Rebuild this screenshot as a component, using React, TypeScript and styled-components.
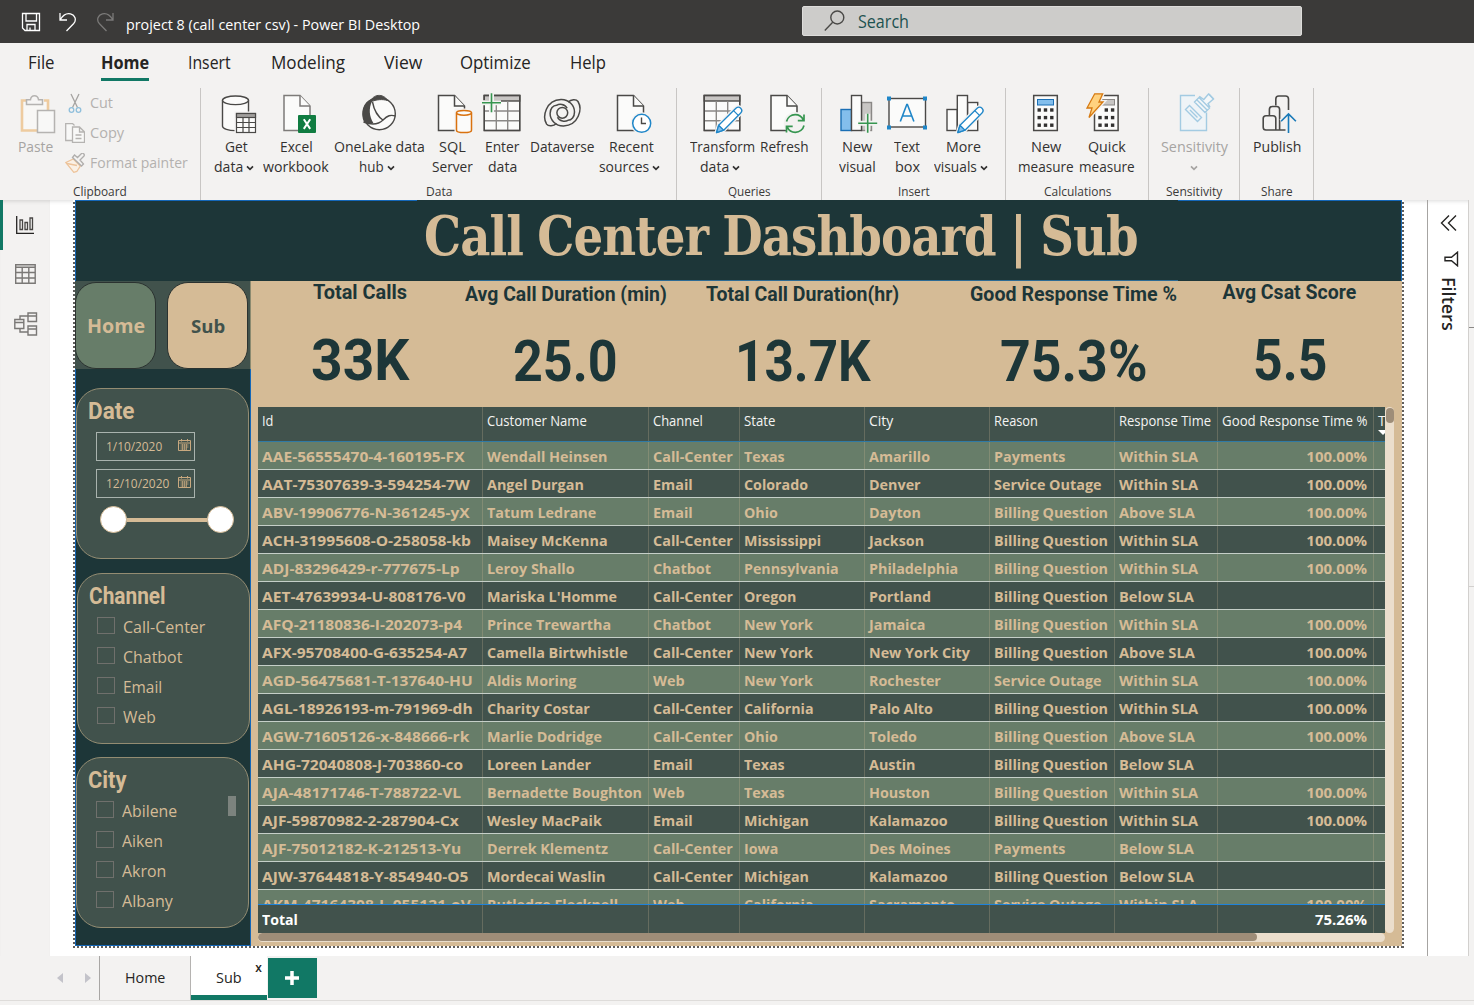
import React, { useLayoutEffect, useRef, useState } from "react";
import styled, { createGlobalStyle } from "styled-components";

const UI = `"Open Sans", "Noto Sans", sans-serif`;
const DIN = `Roboto, "Liberation Sans", sans-serif`;
const C = {
  deep: "#1d3638",
  slate: "#41524c",
  sage: "#677d69",
  sand: "#d5bb96",
  chrome: "#f3f2f1",
  green: "#117865",
  ink: "#3b3a39",
  blue: "#1467b8",
};

const Global = createGlobalStyle`
  * { box-sizing: border-box; }
  html, body { margin: 0; padding: 0; overflow: hidden; background: ${C.chrome}; }
  body { font-family: ${UI}; color: #252423; }
  svg { display: block; flex: none; }
`;

/* ---------- text that keeps a fixed measure ---------- */
const FitBox = styled.span`
  display: inline-block;
  white-space: nowrap;
  text-align: left;
  flex: none;
`;
const FitInk = styled.span`
  display: inline-block;
  transform-origin: 0 50%;
`;
function Fit({ w, children }: { w: number; children: React.ReactNode }) {
  const ref = useRef<HTMLSpanElement>(null);
  const [k, setK] = useState(1);
  useLayoutEffect(() => {
    if (ref.current) setK(w / ref.current.offsetWidth);
  }, [w]);
  return (
    <FitBox style={{ width: w }}>
      <FitInk ref={ref} style={{ transform: `scaleX(${k})` }}>{children}</FitInk>
    </FitBox>
  );
}

/* ---------- window ---------- */
const Window = styled.div`
  width: 1474px;
  height: 1005px;
  display: flex;
  flex-direction: column;
  background: ${C.chrome};
  overflow: hidden;
`;
const TitleBar = styled.header`
  height: 43px;
  flex: none;
  display: flex;
  align-items: center;
  background: ${C.ink};
  color: #fff;
  font-size: 15px;
`;
const QuickIcons = styled.div`
  display: flex;
  align-items: center;
  gap: 17px;
  padding-left: 21px;
  width: 126px;
`;
const DocName = styled.div`
  width: 676px;
  padding-top: 5px;
`;
const SearchBox = styled.div`
  width: 500px;
  height: 30px;
  display: flex;
  align-items: center;
  gap: 13px;
  padding: 0 0 1px 21px;
  margin-top: -1px;
  border-radius: 2px;
  background: #cdccca;
  border: 1px solid #dddcda;
  color: #1d5250;
  font-size: 18px;
`;
const Tabs = styled.nav`
  height: 45px;
  flex: none;
  display: flex;
  padding-left: 28px;
  font-size: 18px;
  line-height: 39px;
`;
const Tab = styled.div<{ $gap: number; $on?: boolean }>`
  height: 38px;
  margin-right: ${(p) => p.$gap}px;
  font-weight: ${(p) => (p.$on ? 700 : 400)};
  border-bottom: ${(p) => (p.$on ? `3px solid ${C.green}` : "0")};
`;

/* ---------- ribbon ---------- */
const Ribbon = styled.div`
  height: 112px;
  flex: none;
  display: flex;
`;
const Group = styled.section<{ $w: number }>`
  width: ${(p) => p.$w}px;
  height: 112px;
  display: flex;
  flex-direction: column;
  border-right: 1px solid #c8c6c4;
`;
const GroupBody = styled.div<{ $pad: number }>`
  display: flex;
  padding-left: ${(p) => p.$pad}px;
  height: 92px;
`;
const GroupName = styled.div`
  text-align: center;
  font-size: 12.5px;
  line-height: 16px;
  padding-top: 4px;
  height: 20px;
  color: #3b3a39;
`;
const Btn = styled.div<{ $w: number; $off?: boolean }>`
  width: ${(p) => p.$w}px;
  flex: none;
  display: flex;
  flex-direction: column;
  align-items: center;
  padding-top: 5px;
  color: ${(p) => (p.$off ? "#a6a4a2" : "#323130")};
  font-size: 15px;
`;
const Line = styled.div<{ $chev?: boolean }>`
  height: 20px;
  line-height: 20px;
  display: flex;
  align-items: center;
  gap: 3px;
  margin-left: ${(p) => (p.$chev ? -4 : 0)}px;
  &:first-of-type { margin-top: 1px; }
`;
const SmallList = styled.div`
  display: flex;
  flex-direction: column;
  color: #b3b1af;
  font-size: 15px;
`;
const SmallRow = styled.div`
  height: 30px;
  display: flex;
  align-items: center;
  gap: 5px;
`;
const SmallText = styled.span`
  margin-top: -2px;
`;

const Chev = ({ c = "#323130" }: { c?: string }) => (
  <svg width="8" height="6" viewBox="0 0 8 6" style={{ marginTop: 3 }}>
    <path d="M1 1.3L4 4.3L7 1.3" fill="none" stroke={c} strokeWidth="1.7" />
  </svg>
);

const K = "#4a4947";
const DocShape = ({ x, c = K }: { x: number; c?: string }) => (
  <g fill="#fbfbfa" stroke={c} strokeWidth="1.5">
    <path d={`M${x} 95.5h16l10 10.5v24.5h-26z`} />
    <path d={`M${x + 16} 95.5v10.5h10`} />
  </g>
);
const Grid = ({ x }: { x: number }) => (
  <g fill="none" stroke={K} strokeWidth="1.4">
    <rect x={x} y="95.5" width="35.4" height="35" fill="#fbfbfa" />
    <rect x={x} y="95.5" width="35.4" height="5.5" fill="#c8c6c4" />
    <path d={`M${x + 12} 101v29.5M${x + 23.4} 101v29.5M${x} 111h35.4M${x} 120.8h35.4`} stroke="#8a8886" />
    <rect x={x} y="95.5" width="35.4" height="35" />
  </g>
);
const Pencil = ({ x }: { x: number }) => (
  <g strokeWidth="1.3" stroke="#1f86c8" strokeLinejoin="round">
    <path d={`M${x} 132.6l2.2-7.4L${x + 19.4} 108.2c1.6-1.4 3.4-1.4 4.8 0s1.4 3.4 0 4.8L${x + 7.2} 130.2z`} fill="#fff" stroke="#f3f2f1" strokeWidth="4" />
    <path d={`M${x} 132.6l2.2-7.4L${x + 19.4} 108.2c1.6-1.4 3.4-1.4 4.8 0s1.4 3.4 0 4.8L${x + 7.2} 130.2z`} fill="#fff" />
    <path d={`M${x} 132.6l2.2-7.4 5 5z`} fill="#83beec" />
    <path d={`M${x + 17} 110.6l5 5`} />
  </g>
);
const Plus = ({ x, y }: { x: number; y: number }) => (
  <g>
    <path d={`M${x - 9.5} ${y}h19M${x} ${y - 9.5}v19`} stroke="#f3f2f1" strokeWidth="5" />
    <path d={`M${x - 9.5} ${y}h19M${x} ${y - 9.5}v19`} stroke="#369650" strokeWidth="1.6" />
  </g>
);
const Keys = ({ x, skip }: { x: number; skip?: boolean }) => (
  <g fill="#323130">
    {[0, 1, 2].map((r) =>
      [0, 1, 2].map((c) =>
        skip && c === 0 && r === 0 ? null : (
          <rect key={`${r}${c}`} x={x + c * 6.3} y={108.3 + r * 7.6} width="3.4" height="3.4" />
        )
      )
    )}
  </g>
);

const icons: Record<string, React.ReactNode> = {
  get: (
    <>
      <g fill="#fbfbfa" stroke={K} strokeWidth="1.4">
        <path d="M222.5 100.3v26c0 2.5 6 4.3 13 4.3s13-1.8 13-4.3v-26" />
        <ellipse cx="235.5" cy="100.3" rx="13" ry="4.3" />
      </g>
      <rect x="234.5" y="111.5" width="23" height="23" fill={C.chrome} />
      <g stroke={K} strokeWidth="1.2" fill="#fbfbfa">
        <rect x="236.5" y="113.5" width="19" height="19" />
        <rect x="236.5" y="113.5" width="19" height="4" fill="#a19f9d" />
        <path d="M243 117.5v15M249 117.5v15M236.5 122.5h19M236.5 127.5h19" />
      </g>
    </>
  ),
  excel: (
    <>
      <DocShape x={284} c="#7d7b79" />
      <rect x="298" y="115" width="18" height="18" rx="1" fill="#107c41" />
      <path d="M303.8 119.3l6.4 9.6M310.2 119.3l-6.4 9.6" stroke="#fff" strokeWidth="2" />
    </>
  ),
  lake: (
    <>
      <circle cx="379.3" cy="113.7" r="16" fill="#fbfbfa" stroke={K} strokeWidth="1.4" />
      <path d="M372 98.5c-9 3.5-12 14-8 23.5 3 1.8 7 2 9.5 1.2-4.5-7-4.8-15-1.5-21.7z" fill={K} />
      <path d="M370.5 102c2-8 13-9 17-1.5-5-1.5-11-1.2-17 1.5z" fill={K} stroke={K} />
      <path d="M372.5 102c1.5 8 5 14.5 11 18.5M363.5 122c8 3 15 2.5 19.5-2s7.500-5.500 12.500-4" fill="none" stroke={K} strokeWidth="1.4" />
    </>
  ),
  sql: (
    <>
      <DocShape x={438.5} />
      <rect x="454.5" y="108.5" width="19" height="26" fill={C.chrome} />
      <g fill="#fbfbfa" stroke="#d9720f" strokeWidth="1.5">
        <path d="M456.5 112.8v17.4c0 1.4 3.3 2.4 7.5 2.4s7.5-1 7.5-2.4v-17.4" />
        <ellipse cx="464" cy="112.8" rx="7.5" ry="2.4" />
      </g>
    </>
  ),
  enter: (
    <>
      <Grid x={484.3} />
      <Plus x={491.5} y={102.7} />
    </>
  ),
  verse: (
    <g fill="none" stroke={K} strokeWidth="1.5">
      <path d="M556.5 123.5c-3 2.7-8 3.2-9.9.6-4.6-7.5-.8-23.8 14.4-24.5 8-.2 13.5 6 13.5 12.4 0 5-3 8.3-6.5 8.3-2.500 1.500-8.500 1.500-10.500-3" />
      <path d="M568.1 102.1c3-2.7 8-3.200 9.900-.6 4.600 7.500.8 23.800-14.400 24.500-8 .2-13.500-6-13.500-12.400 0-5 3-8.300 6.500-8.300 2.500-1.500 8.500-1.500 10.500 3" />
      <circle cx="562.3" cy="112.8" r="5.400" />
    </g>
  ),
  recent: (
    <>
      <DocShape x={617.5} />
      <circle cx="641.7" cy="123.3" r="11" fill={C.chrome} />
      <circle cx="641.7" cy="123.3" r="9" fill="#fff" stroke="#1f86c8" strokeWidth="1.5" />
      <path d="M641.5 117.5v6h4.5" fill="none" stroke={K} strokeWidth="1.4" />
    </>
  ),
  transform: (
    <>
      <Grid x={704.3} />
      <Pencil x={716.5} />
    </>
  ),
  refresh: (
    <>
      <DocShape x={770.5} />
      <circle cx="794.7" cy="123.5" r="11.5" fill={C.chrome} />
      <g fill="none" stroke="#369650" strokeWidth="1.7">
        <path d="M786 121.500c1-4 4.500-6.800 8.700-6.800 3.500 0 6.500 1.800 8.200 5.500M803.500 114.500v6.200h-6.200" />
        <path d="M803.500 125.500c-1 4-4.500 6.800-8.700 6.800-3.500 0-6.500-1.800-8.200-5.500M786 132.500v-6.200h6.200" />
      </g>
    </>
  ),
  visual: (
    <>
      <g strokeWidth="1.4" stroke={K}>
        <rect x="861.5" y="102.5" width="10" height="28" fill="#c8c6c4" stroke="#8a8886" />
        <rect x="841" y="109.5" width="10.5" height="21" fill="#83beec" stroke="#1a6fb5" />
        <rect x="851.5" y="95.5" width="10" height="35" fill="#fbfbfa" />
      </g>
      <Plus x={867.7} y={123.3} />
    </>
  ),
  textbox: (
    <>
      <rect x="889" y="98.5" width="36.5" height="28.5" fill="#fbfbfa" stroke={K} strokeWidth="1.4" />
      <g fill="#1f86c8">
        <rect x="887" y="96.5" width="4" height="4" />
        <rect x="923" y="96.5" width="4" height="4" />
        <rect x="887" y="125.5" width="4" height="4" />
        <rect x="923" y="125.5" width="4" height="4" />
      </g>
      <path d="M900.3 121.500l6.500-17h.6l6.500 17M902.300 116h9.600" fill="none" stroke="#1f86c8" strokeWidth="1.6" />
    </>
  ),
  more: (
    <>
      <g strokeWidth="1.4" stroke={K} fill="#fbfbfa">
        <rect x="947" y="109.5" width="10.3" height="21" />
        <rect x="967.5" y="102.5" width="10.2" height="28" />
        <rect x="957.3" y="95.5" width="10.2" height="35" />
      </g>
      <Pencil x={957.8} />
    </>
  ),
  measure: (
    <>
      <rect x="1033.7" y="95.5" width="23.6" height="35" fill="#fbfbfa" stroke={K} strokeWidth="1.5" />
      <rect x="1037.5" y="99.5" width="16" height="5.5" fill="#83beec" stroke="#1a6fb5" />
      <Keys x={1037.5} />
    </>
  ),
  quick: (
    <>
      <rect x="1094.5" y="95.5" width="23.6" height="35" fill="#fbfbfa" stroke={K} strokeWidth="1.5" />
      <rect x="1101.5" y="99.5" width="13" height="5.5" fill="#c8c6c4" stroke="#8a8886" />
      <Keys x={1098.3} skip />
      <path d="M1094.7 93.800h8l-3.700 8.200h4l-14 15.500 3-9.500h-5z" fill="#ffd27f" stroke={C.chrome} strokeWidth="4" />
      <path d="M1094.7 93.800h8l-3.700 8.200h4l-14 15.500 3-9.500h-5z" fill="#ffd27f" stroke="#d67a12" strokeWidth="1.3" />
    </>
  ),
  sens: (
    <g fill="none" stroke="#a3cbe2" strokeWidth="1.4">
      <path d="M1195 95.500h-14.500v35h26v-18" fill="#eff4f7" />
      <path d="M1185.500 109.500l4-4 12 12-4 4zM1190 110l7.500 7.500" />
      <path d="M1194.500 102l4.500-4.500 10.500 10.500-4.500 4.500zM1196.800 99.700l3-3 4 2.800 4.700-5.500 5 5-5.500 4.700 2 3.500" fill="#f3f7f9" />
      <path d="M1196.500 99.500l10.800 10.800M1209 94l4.500 5" />
    </g>
  ),
  publish: (
    <g fill="none" stroke={K} strokeWidth="1.6">
      <path d="M1275.300 105.500v-6.500q0-3 3-3h6.700q3 0 3 3v11" />
      <path d="M1268.900 115.500v-6q0-3 3-3h4.200q3 0 3 3v20.500" />
      <path d="M1285 130h-19.500q-2.800 0-2.800-2.800v-8.600q0-2.800 2.800-2.800h7q2.800 0 2.800 2.800v11.400" />
      <path d="M1288 133v-19M1280.600 121.300l7.400-7.400 7.400 7.400" stroke={C.chrome} strokeWidth="4.5" />
      <path d="M1288 133v-19M1280.600 121.300l7.400-7.400 7.400 7.400" stroke="#1a7ab8" />
    </g>
  ),
  paste: (
    <g fill="none" strokeWidth="1.5">
      <path d="M26 100.500h-4v30h26v-30h-4" stroke="#eecb9f" strokeWidth="2.6" fill="#f8f7f5" />
      <path d="M26.500 104.500v-4.800h4c.4-2.600 2-3.900 4-3.900s3.600 1.300 4 3.900h4v4.800z" stroke="#b5b3b1" fill="#f6f5f4" />
      <rect x="37.5" y="110.5" width="17" height="22" fill="#f8f8f7" stroke="#b5b3b1" />
    </g>
  ),
};

type B = { icon: string; cx: number; w: number; lines: [string, number][]; chev?: boolean; off?: boolean };
const groups: { name: string; nw: number; w: number; pad: number; items: B[] }[] = [
  {
    name: "Data", nw: 26, w: 476, pad: 11,
    items: [
      { icon: "get", cx: 236, w: 48, lines: [["Get", 23], ["data", 29]], chev: true },
      { icon: "excel", cx: 296, w: 72, lines: [["Excel", 33], ["workbook", 66]] },
      { icon: "lake", cx: 379, w: 94, lines: [["OneLake data", 91], ["hub", 25]], chev: true },
      { icon: "sql", cx: 452, w: 52, lines: [["SQL", 27], ["Server", 41]] },
      { icon: "enter", cx: 502, w: 48, lines: [["Enter", 34], ["data", 29]] },
      { icon: "verse", cx: 562, w: 72, lines: [["Dataverse", 65]] },
      { icon: "recent", cx: 631, w: 66, lines: [["Recent", 45], ["sources", 50]], chev: true },
    ],
  },
  {
    name: "Queries", nw: 43, w: 145, pad: 9,
    items: [
      { icon: "transform", cx: 722, w: 72, lines: [["Transform", 65], ["data", 29]], chev: true },
      { icon: "refresh", cx: 784.5, w: 53, lines: [["Refresh", 49]] },
    ],
  },
  {
    name: "Insert", nw: 32, w: 184, pad: 12,
    items: [
      { icon: "visual", cx: 857, w: 46, lines: [["New", 30], ["visual", 37]] },
      { icon: "textbox", cx: 907, w: 54, lines: [["Text", 26], ["box", 25]] },
      { icon: "more", cx: 963, w: 58, lines: [["More", 35], ["visuals", 43]], chev: true },
    ],
  },
  {
    name: "Calculations", nw: 67, w: 143, pad: 10,
    items: [
      { icon: "measure", cx: 1046, w: 60, lines: [["New", 30], ["measure", 56]] },
      { icon: "quick", cx: 1107, w: 62, lines: [["Quick", 38], ["measure", 56]] },
    ],
  },
  { name: "Sensitivity", nw: 56, w: 91, pad: 0, items: [{ icon: "sens", cx: 1194, w: 90, lines: [["Sensitivity", 67], ["", 0]], chev: true, off: true }] },
  { name: "Share", nw: 32, w: 74, pad: 0, items: [{ icon: "publish", cx: 1276.5, w: 73, lines: [["Publish", 48]] }] },
];

const RibbonButton = ({ b }: { b: B }) => (
  <Btn $w={b.w} $off={b.off}>
    <svg width="48" height="42" viewBox={`${b.cx - 24} 93 48 42`}>{icons[b.icon]}</svg>
    {b.lines.map(([t, w], i) => (
      <Line key={i} $chev={b.chev && i === 1 && t !== ""}>
        {t && <Fit w={w}>{t}</Fit>}
        {b.chev && i === 1 && <Chev c={b.off ? "#a6a4a2" : undefined} />}
      </Line>
    ))}
  </Btn>
);

/* ---------- work area ---------- */
const Work = styled.div`
  height: 756px;
  flex: none;
  display: flex;
  background: #fff;
  box-shadow: inset 0 4px 4px -3px rgba(0, 0, 0, 0.15);
`;
const Rail = styled.aside`
  width: 50px;
  background: ${C.chrome};
  box-shadow: inset 0 4px 4px -3px rgba(0, 0, 0, 0.15);
`;
const RailItem = styled.div<{ $on?: boolean }>`
  height: 50px;
  display: flex;
  align-items: center;
  padding-bottom: ${(p) => (p.$on ? 0 : 2)}px;
  padding-left: ${(p) => (p.$on ? 11 : 14)}px;
  border-left: ${(p) => (p.$on ? `3px solid ${C.green}` : "0")};
`;
const Canvas = styled.main`
  width: 1377px;
  padding-left: 23px;
`;
const DotFrame = styled.div`
  width: 1331px;
  height: 748px;
  padding: 0 2px 2px 2px;
  background:
    repeating-linear-gradient(180deg, #fff 0 2px, #605e5c 2px 4px) 0 0 / 2px 100% no-repeat,
    repeating-linear-gradient(180deg, #fff 0 2px, #605e5c 2px 4px) 100% 0 / 2px 100% no-repeat,
    repeating-linear-gradient(90deg, #605e5c 0 2px, #fff 2px 4px) 0 100% / 100% 2px no-repeat;
`;
const Page = styled.div`
  width: 1327px;
  height: 746px;
  background: ${C.sand};
  overflow: hidden;
`;
const Banner = styled.div`
  height: 81px;
  display: flex;
  justify-content: center;
  padding-left: 86px;
  padding-right: 1px;
  background:
    linear-gradient(${C.blue}, ${C.blue}) 0 0 / 342px 1px no-repeat,
    linear-gradient(${C.blue}, ${C.blue}) 100% 0 / 224px 1px no-repeat,
    linear-gradient(${C.blue}, ${C.blue}) 0 0 / 1px 100% no-repeat,
    linear-gradient(${C.blue}, ${C.blue}) 100% 0 / 1px 100% no-repeat,
    linear-gradient(#2c6a94, #2c6a94) 394px 100% / 709px 1px no-repeat,
    ${C.deep};
  font-family: "DejaVu Serif Condensed", "DejaVu Serif", serif;
  font-stretch: condensed;
  font-weight: 700;
  font-size: 55px;
  line-height: 71px;
  word-spacing: -1px;
  letter-spacing: -1px;
  color: ${C.sand};
`;
const Body = styled.div`
  display: flex;
  height: 665px;
`;
const Side = styled.div`
  width: 176px;
  background: ${C.deep};
  border-left: 1px solid ${C.blue};
  border-right: 1px solid ${C.blue};
  border-bottom: 1px solid ${C.blue};
`;
const NavBox = styled.div`
  height: 88px;
  margin: 0 -1px 0 -1px;
  background: ${C.slate};
  border-right: 1px solid #8b8a70;
  padding-top: 1px;
  display: flex;
  gap: 11px;
`;
const NavBtn = styled.div<{ $sub?: boolean }>`
  width: 81px;
  height: 87px;
  border-radius: 21px;
  border: 1px solid #2b3230;
  background: ${(p) => (p.$sub ? C.sand : C.sage)};
  color: ${(p) => (p.$sub ? C.slate : C.sand)};
  font-weight: 700;
  font-size: ${(p) => (p.$sub ? 18 : 20)}px;
  display: flex;
  align-items: center;
  justify-content: center;
  padding-left: 1px;
`;
const Card = styled.div<{ $mt: number; $dx?: number }>`
  width: 173px;
  height: 171px;
  margin-top: ${(p) => p.$mt}px;
  margin-left: ${(p) => p.$dx || 0}px;
  padding-left: 11px;
  border: 1px solid #938c72;
  border-radius: 25px;
  background: ${C.slate};
  color: ${C.sand};
`;
const CardTitle = styled.div<{ $short?: boolean }>`
  height: ${(p) => (p.$short ? 38 : 43)}px;
  line-height: 45px;
  font-family: ${DIN};
  font-weight: 700;
  font-size: 23px;
`;
const DateBox = styled.div`
  width: 99px;
  height: 29px;
  margin: 0 0 8px 8px;
  padding: 0 3px 0 9px;
  border: 1px solid #a9b3ae;
  display: flex;
  align-items: center;
  justify-content: space-between;
  font-size: 12.5px;
  line-height: 27px;
  svg { margin-top: -3px; }
`;
const Slider = styled.div`
  display: flex;
  align-items: center;
  margin: 5px 0 0 12px;
  width: 134px;
`;
const Knob = styled.div`
  width: 27px;
  height: 27px;
  border-radius: 50%;
  background: #fff;
  border: 1px solid ${C.sand};
  flex: none;
`;
const Track = styled.div`
  height: 4px;
  flex: 1;
  background: ${C.sand};
`;
const ListWrap = styled.div`
  display: flex;
  justify-content: space-between;
  padding-right: 12px;
`;
const Check = styled.div`
  height: 30.1px;
  display: flex;
  align-items: center;
  gap: 8px;
  padding-left: 8px;
  font-size: 17px;
  line-height: 24px;
`;
const Box = styled.span`
  width: 18px;
  height: 17px;
  border: 1px solid #6f706c;
  margin-top: -3px;
`;
const MiniThumb = styled.div`
  width: 8px;
  height: 20px;
  background: #7c837e;
`;
const Main = styled.div`
  width: 1151px;
`;
const Kpis = styled.div`
  height: 126px;
  display: flex;
`;
const Kpi = styled.div<{ $w: number; $up?: boolean }>`
  width: ${(p) => p.$w}px;
  display: flex;
  flex-direction: column;
  align-items: center;
  padding-top: ${(p) => (p.$up ? 0 : 1.5)}px;
  font-family: ${DIN};
  font-weight: 700;
  color: ${C.deep};
`;
const KLabel = styled.div`
  font-size: 19.5px;
  line-height: 24px;
`;
const KValue = styled.div`
  font-size: 58px;
  line-height: 60px;
  margin-top: 24.5px;
`;
const TableArea = styled.div`
  display: flex;
  padding-left: 7px;
`;
const TableCol = styled.div`
  width: 1127px;
`;
const cols = "225px 166px 91px 125px 125px 125px 103px 156px 11px";
const HeadRow = styled.div`
  display: grid;
  grid-template-columns: ${cols};
  height: 35px;
  background: ${C.slate};
  border-bottom: 1px solid #2f7aa5;
  color: #f4f4f2;
  font-size: 14px;
  line-height: 28px;
  overflow: hidden;
`;
const Rows = styled.div`
  height: 462px;
  overflow: hidden;
`;
const Row = styled.div<{ $alt?: boolean }>`
  display: grid;
  grid-template-columns: ${cols};
  height: 28px;
  background: ${(p) => (p.$alt ? C.slate : C.sage)};
  border-bottom: 1px solid #c5cfc8;
  color: ${C.sand};
  font-weight: 700;
  font-size: 15px;
  line-height: 28px;
`;
const Cell = styled.div<{ $r?: boolean }>`
  padding: 0 ${(p) => (p.$r ? 6 : 0)}px 0 4px;
  text-align: ${(p) => (p.$r ? "right" : "left")};
  border-right: 1px solid rgba(213, 187, 150, 0.25);
  white-space: nowrap;
  overflow: hidden;
  &:last-child { border-right: 0; }
`;
const Stretch = styled.span<{ $k: number }>`
  display: inline-block;
  transform: scaleX(${(p) => p.$k});
  transform-origin: 0 50%;
`;
const TotalRow = styled.div`
  display: grid;
  grid-template-columns: ${cols};
  height: 29px;
  background: ${C.slate};
  border-top: 1px solid #1f83dc;
  color: #fff;
  font-weight: 700;
  font-size: 15px;
  line-height: 29px;
`;
const HBar = styled.div`
  height: 9px;
  border-radius: 5px;
  background: #ebdecc;
  overflow: hidden;
`;
const HThumb = styled.div`
  width: 999px;
  height: 8px;
  border-radius: 5px;
  background: #9e8d78;
`;
const VBar = styled.div`
  width: 9px;
  height: 526px;
  padding: 1px 0 0 1px;
  border-radius: 5px;
  background: #ebdecc;
`;
const VThumb = styled.div`
  width: 8px;
  height: 15px;
  border-radius: 5px;
  background: #9e8d78;
`;
const SortHead = styled.div`
  padding-left: 4px;
  overflow: hidden;
`;
const SortMark = styled.div`
  width: 0;
  border: 5px solid transparent;
  border-top: 5px solid #fff;
  border-bottom: 0;
  margin-top: -5px;
`;

const FilterPane = styled.aside`
  width: 42px;
  border-left: 1px solid #a6a4a2;
  border-right: 1px solid #d2d0ce;
  display: flex;
  flex-direction: column;
  align-items: center;
`;
const FilterText = styled.div`
  writing-mode: vertical-rl;
  font-weight: 600;
  font-size: 18px;
  line-height: 20px;
  margin: 10px 0 0 2px;
`;
const Edge = styled.div`
  width: 5px;
  background:
    linear-gradient(#8a8886, #8a8886) 0 127px / 100% 1px no-repeat,
    linear-gradient(#d2d0ce, #d2d0ce) 0 386px / 100% 1px no-repeat,
    ${C.chrome};
`;

const Foot = styled.footer`
  height: 45px;
  flex: none;
  display: flex;
  border-bottom: 1px solid #dedcda;
  font-size: 15px;
`;
const Arrows = styled.div`
  width: 100px;
  display: flex;
  align-items: center;
  gap: 22px;
  padding-left: 57px;
  border-right: 1px solid #a8a6a4;
`;
const PageTab = styled.div<{ $w: number; $on?: boolean }>`
  width: ${(p) => p.$w}px;
  display: flex;
  justify-content: center;
  line-height: 43px;
  background: ${(p) => (p.$on ? "#fff" : "transparent")};
  border-right: ${(p) => (p.$on ? "0" : "1px solid #b5b3b1")};
  border-bottom: ${(p) => (p.$on ? `5px solid ${C.green}` : "0")};
  padding-left: ${(p) => (p.$on ? 20 : 0)}px;
`;
const Close = styled.span`
  font-size: 12px;
  line-height: 23px;
  font-weight: 600;
  margin-left: 13px;
`;
const Add = styled.div`
  width: 49px;
  height: 40px;
  margin: 2px 0 0 1px;
  padding-right: 1px;
  background: ${C.green};
  display: flex;
  align-items: center;
  justify-content: center;
`;

/* ---------- data ---------- */
const W = "Within SLA", A = "Above SLA", L = "Below SLA";
const CC = "Call-Center", BQ = "Billing Question", SO = "Service Outage", P = "Payments";
const stretch = [1.037, 0.957, 0.962, 0.95, 0.955, 0.958, 0.978];
const data: string[][] = [
  ["AAE-56555470-4-160195-FX", "Wendall Heinsen", CC, "Texas", "Amarillo", P, W],
  ["AAT-75307639-3-594254-7W", "Angel Durgan", "Email", "Colorado", "Denver", SO, W],
  ["ABV-19906776-N-361245-yX", "Tatum Ledrane", "Email", "Ohio", "Dayton", BQ, A],
  ["ACH-31995608-O-258058-kb", "Maisey McKenna", CC, "Mississippi", "Jackson", BQ, W],
  ["ADJ-83296429-r-777675-Lp", "Leroy Shallo", "Chatbot", "Pennsylvania", "Philadelphia", BQ, W],
  ["AET-47639934-U-808176-V0", "Mariska L'Homme", CC, "Oregon", "Portland", BQ, L],
  ["AFQ-21180836-I-202073-p4", "Prince Trewartha", "Chatbot", "New York", "Jamaica", BQ, W],
  ["AFX-95708400-G-635254-A7", "Camella Birtwhistle", CC, "New York", "New York City", BQ, A],
  ["AGD-56475681-T-137640-HU", "Aldis Moring", "Web", "New York", "Rochester", SO, W],
  ["AGL-18926193-m-791969-dh", "Charity Costar", CC, "California", "Palo Alto", BQ, W],
  ["AGW-71605126-x-848666-rk", "Marlie Dodridge", CC, "Ohio", "Toledo", BQ, A],
  ["AHG-72040808-J-703860-co", "Loreen Lander", "Email", "Texas", "Austin", BQ, L],
  ["AJA-48171746-T-788722-VL", "Bernadette Boughton", "Web", "Texas", "Houston", BQ, W],
  ["AJF-59870982-2-287904-Cx", "Wesley MacPaik", "Email", "Michigan", "Kalamazoo", BQ, W],
  ["AJF-75012182-K-212513-Yu", "Derrek Klementz", CC, "Iowa", "Des Moines", P, L],
  ["AJW-37644818-Y-854940-O5", "Mordecai Waslin", CC, "Michigan", "Kalamazoo", BQ, L],
  ["AKM-47164308-L-055121-oV", "Rutledge Flecknell", "Web", "California", "Sacramento", SO, W],
];
const heads: [string, number][] = [
  ["Id", 11], ["Customer Name", 100], ["Channel", 50], ["State", 31], ["City", 24], ["Reason", 44], ["Response Time", 92], ["Good Response Time %", 145],
];
const kpis: [string, number, string, number, number, boolean][] = [
  ["Total Calls", 94, "33K", 98, 218, true],
  ["Avg Call Duration (min)", 202, "25.0", 105, 193, false],
  ["Total Call Duration(hr)", 193, "13.7K", 136, 281, false],
  ["Good Response Time %", 207, "75.3%", 148, 261, false],
  ["Avg Csat Score", 134, "5.5", 74, 171, true],
];

const Cal = () => (
  <svg width="13" height="12" viewBox="0 0 13 12" fill="none" stroke="#c9a97f" strokeWidth="1">
    <path d="M.5 1.5h12v10h-12zM.5 4h12M3.5 0v2.5M9.5 0v2.5" />
    <path d="M2.500 6h8M2.500 8h8M2.500 10h6M4.500 5v6M6.500 5v6M8.500 5v6" strokeWidth=".7" />
  </svg>
);
const CheckRow = ({ t, w }: { t: string; w: number }) => (
  <Check><Box /><Fit w={w}>{t}</Fit></Check>
);

export default function App() {
  return (
    <Window>
      <Global />
      <TitleBar>
        <QuickIcons>
          <svg width="20" height="20" viewBox="0 0 20 20" fill="none" stroke="#fff" strokeWidth="1.3">
            <path d="M1.5 1.5h17v17H4l-2.500-2.500zM5 1.500v7.500h10.500V1.500M6 18.500v-6h8v6M9 15.500v3" />
          </svg>
          <svg width="20" height="20" viewBox="0 0 20 20" fill="none" stroke="#fff" strokeWidth="1.3">
            <path d="M2 1v7h7M2.300 7.500C5 3 9 1 12.500 1.800 17 3 19 8 15.500 11.800L8.500 19" />
          </svg>
          <svg width="20" height="20" viewBox="0 0 20 20" fill="none" stroke="#7b7a79" strokeWidth="1.3">
            <path d="M18 1v7h-7M17.700 7.500C15 3 11 1 7.500 1.800 3 3 1 8 4.500 11.800L11.500 19" />
          </svg>
        </QuickIcons>
        <DocName><Fit w={294}>project 8 (call center csv) - Power BI Desktop</Fit></DocName>
        <SearchBox>
          <svg width="21" height="22" viewBox="0 0 21 22" fill="none" stroke={K} strokeWidth="1.4">
            <circle cx="13.3" cy="7.5" r="6.5" />
            <path d="M8.700 12.300L.8 20.500" />
          </svg>
          <Fit w={51}>Search</Fit>
        </SearchBox>
      </TitleBar>
      <Tabs>
        <Tab $gap={46}><Fit w={27}>File</Fit></Tab>
        <Tab $gap={39} $on><Fit w={48}>Home</Fit></Tab>
        <Tab $gap={40}><Fit w={43}>Insert</Fit></Tab>
        <Tab $gap={39}><Fit w={74}>Modeling</Fit></Tab>
        <Tab $gap={38}><Fit w={38}>View</Fit></Tab>
        <Tab $gap={39}><Fit w={71}>Optimize</Fit></Tab>
        <Tab $gap={0}><Fit w={36}>Help</Fit></Tab>
      </Tabs>
      <Ribbon>
        <Group $w={201}>
          <GroupBody $pad={5}>
            <Btn $w={60} $off>
              <svg width="48" height="42" viewBox="11 93 48 42">{icons.paste}</svg>
              <Line><Fit w={35}>Paste</Fit></Line>
            </Btn>
            <SmallList>
              <SmallRow>
                <svg width="20" height="20" viewBox="65 93 20 20" fill="none" strokeWidth="1.3">
                  <path d="M71 94l6.500 13.500M79 94l-6.500 13.500" stroke="#a5a3a1" />
                  <circle cx="71.5" cy="110" r="2.3" stroke="#8fbfdc" />
                  <circle cx="78.5" cy="110" r="2.3" stroke="#8fbfdc" />
                </svg>
                <SmallText><Fit w={23}>Cut</Fit></SmallText>
              </SmallRow>
              <SmallRow>
                <svg width="20" height="20" viewBox="65 123 20 20" fill="#f8f8f7" stroke="#b5b3b1" strokeWidth="1.3">
                  <path d="M72 140.500h-6.300v-17h6.800l2 2" />
                  <path d="M72.500 127h7l5 5v10.300h-12zM79.500 127v5h5M75.500 135h6M75.500 138.500h6" />
                </svg>
                <SmallText><Fit w={34}>Copy</Fit></SmallText>
              </SmallRow>
              <SmallRow>
                <svg width="20" height="20" viewBox="65 153 20 20" fill="none" strokeWidth="1.3">
                  <path d="M65.800 162.500l7.500-3.500 7 7-3.500 5.500-3 .8z" stroke="#edc39a" fill="#faf1e6" />
                  <path d="M67 163.500l10 2" stroke="#edc39a" />
                  <path d="M72.500 157.500l9 8.500 2-2-3.500-4 4-4c1-1.500-1-3.500-2.500-2.500l-4 4-3-2.500z" stroke="#b0aeac" fill="#f3f2f1" />
                </svg>
                <SmallText><Fit w={98}>Format painter</Fit></SmallText>
              </SmallRow>
            </SmallList>
          </GroupBody>
          <GroupName><Fit w={54}>Clipboard</Fit></GroupName>
        </Group>
        {groups.map((g) => (
          <Group key={g.name} $w={g.w}>
            <GroupBody $pad={g.pad}>
              {g.items.map((b) => <RibbonButton key={b.icon} b={b} />)}
            </GroupBody>
            <GroupName><Fit w={g.nw}>{g.name}</Fit></GroupName>
          </Group>
        ))}
      </Ribbon>
      <Work>
        <Rail>
          <RailItem $on>
            <svg width="22" height="20" viewBox="0 0 22 20" fill="none" stroke="#252423" strokeWidth="1.3">
              <path d="M2.700 1v17.300H20" />
              <path d="M6 5h2.500v9.500H6zM11 7.500h2.500v7H11zM16 3h2.500v11.500H16z" stroke="#484644" />
            </svg>
          </RailItem>
          <RailItem>
            <svg width="23" height="22" viewBox="0 0 23 22" fill="none" stroke="#7a7876" strokeWidth="1.4">
              <path d="M1.700 1.700h19.500v18.500H1.700zM1.700 4.300h19.500M1.700 9.500h19.500M1.700 15h19.500M8.200 4.300v16M14.800 4.300v16" />
            </svg>
          </RailItem>
          <RailItem>
            <svg width="24" height="24" viewBox="0 0 24 24" fill="none" stroke="#7a7876" strokeWidth="1.4">
              <path d="M.8 7.500h9v9h-9zM.8 10.500h9M14 1h8.500v8.500H14zM14 4h8.500M14 14h8.500v9H14zM14 17h8.500M6 7.500V4h8M6 16.500v3.500h8" />
            </svg>
          </RailItem>
        </Rail>
        <Canvas>
          <DotFrame>
            <Page>
              <Banner><Fit w={714}>Call Center Dashboard | Sub</Fit></Banner>
              <Body>
                <Side>
                  <NavBox>
                    <NavBtn><Fit w={58}>Home</Fit></NavBtn>
                    <NavBtn $sub><Fit w={34}>Sub</Fit></NavBtn>
                  </NavBox>
                  <Card $mt={19}>
                    <CardTitle><Fit w={46}>Date</Fit></CardTitle>
                    <DateBox><Fit w={56}>1/10/2020</Fit><Cal /></DateBox>
                    <DateBox><Fit w={63}>12/10/2020</Fit><Cal /></DateBox>
                    <Slider><Knob /><Track /><Knob /></Slider>
                  </Card>
                  <Card $mt={14} $dx={1}>
                    <CardTitle $short><Fit w={77}>Channel</Fit></CardTitle>
                    <CheckRow t="Call-Center" w={82} />
                    <CheckRow t="Chatbot" w={59} />
                    <CheckRow t="Email" w={39} />
                    <CheckRow t="Web" w={33} />
                  </Card>
                  <Card $mt={13}>
                    <CardTitle $short><Fit w={39}>City</Fit></CardTitle>
                    <ListWrap>
                      <div>
                        <CheckRow t="Abilene" w={55} />
                        <CheckRow t="Aiken" w={41} />
                        <CheckRow t="Akron" w={44} />
                        <CheckRow t="Albany" w={51} />
                      </div>
                      <MiniThumb />
                    </ListWrap>
                  </Card>
                </Side>
                <Main>
                  <Kpis>
                    {kpis.map(([l, lw, v, vw, w, up]) => (
                      <Kpi key={l} $w={w} $up={up}>
                        <KLabel><Fit w={lw}>{l}</Fit></KLabel>
                        <KValue><Fit w={vw}>{v}</Fit></KValue>
                      </Kpi>
                    ))}
                  </Kpis>
                  <TableArea>
                    <TableCol>
                      <HeadRow>
                        {heads.map(([h, w]) => <Cell key={h}><Fit w={w}>{h}</Fit></Cell>)}
                        <SortHead>To<SortMark /></SortHead>
                      </HeadRow>
                      <Rows>
                        {data.map((r, i) => (
                          <Row key={r[0]} $alt={i % 2 === 1}>
                            {r.map((t, j) => <Cell key={j}><Stretch $k={stretch[j]}>{t}</Stretch></Cell>)}
                            <Cell $r>{r[6] === L ? "" : "100.00%"}</Cell>
                            <Cell />
                          </Row>
                        ))}
                      </Rows>
                      <TotalRow>
                        <Cell><Stretch $k={0.94}>Total</Stretch></Cell><Cell /><Cell /><Cell /><Cell /><Cell /><Cell />
                        <Cell $r>75.26%</Cell><Cell />
                      </TotalRow>
                      <HBar><HThumb /></HBar>
                    </TableCol>
                    <VBar><VThumb /></VBar>
                  </TableArea>
                </Main>
              </Body>
            </Page>
          </DotFrame>
        </Canvas>
        <FilterPane>
          <svg width="18" height="18" viewBox="0 0 18 18" fill="none" stroke="#252423" strokeWidth="1.4" style={{ marginTop: 14, marginLeft: 1 }}>
            <path d="M9 1.500L1.500 9 9 16.500M16 1.500L8.500 9l7.500 7.500" />
          </svg>
          <svg width="16" height="16" viewBox="0 0 16 16" fill="none" stroke="#252423" strokeWidth="1.4" style={{ marginTop: 19, marginLeft: 6 }}>
            <path d="M14.500 1.200v13.600L8.500 9.800H2V6.200h6.500z" />
          </svg>
          <FilterText>Filters</FilterText>
        </FilterPane>
        <Edge />
      </Work>
      <Foot>
        <Arrows>
          <svg width="6" height="10" viewBox="0 0 6 10"><path d="M6 0v10L0 5z" fill="#c3c3ca" /></svg>
          <svg width="6" height="10" viewBox="0 0 6 10"><path d="M0 0v10l6-5z" fill="#c3c3ca" /></svg>
        </Arrows>
        <PageTab $w={91}><Fit w={40}>Home</Fit></PageTab>
        <PageTab $w={76} $on><Fit w={26}>Sub</Fit><Close>x</Close></PageTab>
        <Add>
          <svg width="14" height="14" viewBox="0 0 14 14"><path d="M7 0v14M0 7h14" stroke="#fff" strokeWidth="3.5" /></svg>
        </Add>
      </Foot>
    </Window>
  );
}
